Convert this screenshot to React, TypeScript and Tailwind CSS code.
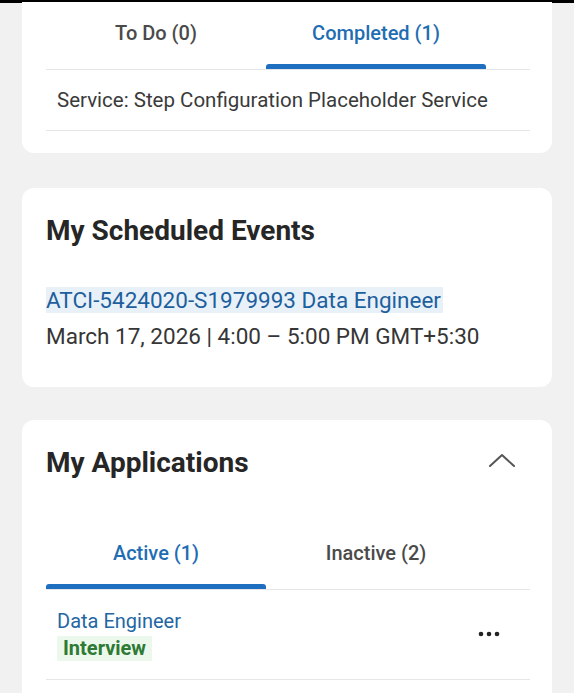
import React from 'react';

const Divider = () => <div className="h-px bg-[#e6e6e6]" />;

interface TabsProps {
  tabs: string[];
  active: number;
}

// tab strip with rounded blue indicator under the active tab
const Tabs: React.FC<TabsProps> = ({ tabs, active }) => (
  <div>
    <div className="flex">
      {tabs.map((t, i) => (
        <div key={t} className="w-[220px] flex flex-col">
          <div
            className={`h-[62px] flex items-center justify-center text-[20px] font-medium ${
              i === active ? 'text-[#1f6db3]' : 'text-[#4a4a4a]'
            }`}
          >
            {t}
          </div>
          <div className={`h-[5px] rounded-t-[3px] ${i === active ? 'bg-[#1f6fc0]' : 'bg-transparent'}`} />
        </div>
      ))}
    </div>
    <Divider />
  </div>
);

const ChevronUp = () => (
  <svg width="28" height="16" viewBox="0 0 28 16" fill="none">
    <polyline points="2,14 14,3 26,14" stroke="#555" strokeWidth="2" strokeLinecap="round" strokeLinejoin="round" />
  </svg>
);

const MoreDots = () => (
  <svg width="22" height="6" viewBox="0 0 22 6">
    <circle cx="3" cy="3" r="2.3" fill="#222" />
    <circle cx="11" cy="3" r="2.3" fill="#222" />
    <circle cx="19" cy="3" r="2.3" fill="#222" />
  </svg>
);

export default function App() {
  return (
    <div className="min-h-screen bg-[#f1f1f1] font-['Roboto',sans-serif] overflow-hidden">
      <div className="h-[3px] bg-black" />

      {/* Tasks card (top cut off) */}
      <div className="mx-[22px] bg-white rounded-b-xl pl-[24px] pr-[22px] pb-[22px] -mt-[1px]">
        <Tabs tabs={['To Do (0)', 'Completed (1)']} active={1} />
        <div className="h-[60px] flex items-center pl-[11px] text-[20.5px] text-[#3a3a3a]">
          Service: Step Configuration Placeholder Service
        </div>
        <Divider />
      </div>

      {/* My Scheduled Events */}
      <div className="mx-[22px] mt-[35px] bg-white rounded-xl pl-[24px] pr-[22px] pt-[26px] pb-[38px]">
        <h2 className="text-[28px] leading-[34px] font-bold text-[#262626]">My Scheduled Events</h2>
        <div className="mt-[39px]">
          <span className="inline-block bg-[#e9f1f8] text-[#1e5f9e] text-[22.5px] leading-[26px] pr-[2px]">
            ATCI-5424020-S1979993 Data Engineer
          </span>
        </div>
        <div className="mt-[8px] text-[22.5px] leading-[26px] text-[#363636]">
          March 17, 2026 | 4:00 – 5:00 PM GMT+5:30
        </div>
      </div>

      {/* My Applications */}
      <div className="mx-[22px] mt-[33px] bg-white rounded-t-xl pl-[24px] pr-[22px] pt-[26px] pb-[40px]">
        <div className="flex items-center justify-between">
          <h2 className="text-[28px] leading-[34px] font-bold text-[#262626]">My Applications</h2>
          <div className="mr-[14px] -mt-[6px]">
            <ChevronUp />
          </div>
        </div>
        <div className="mt-[42px]">
          <Tabs tabs={['Active (1)', 'Inactive (2)']} active={0} />
        </div>
        <div className="flex items-center justify-between pl-[11px] pr-[30px] pt-[19px] pb-[17px]">
          <div>
            <div className="text-[20px] leading-[24px] text-[#2466a3]">Data Engineer</div>
            <span className="inline-block mt-[3px] px-[6px] bg-[#edf8ec] text-[#2e7a34] font-bold text-[20px] leading-[25px]">
              Interview
            </span>
          </div>
          <div className="-mt-[4px]">
            <MoreDots />
          </div>
        </div>
        <Divider />
      </div>
    </div>
  );
}
